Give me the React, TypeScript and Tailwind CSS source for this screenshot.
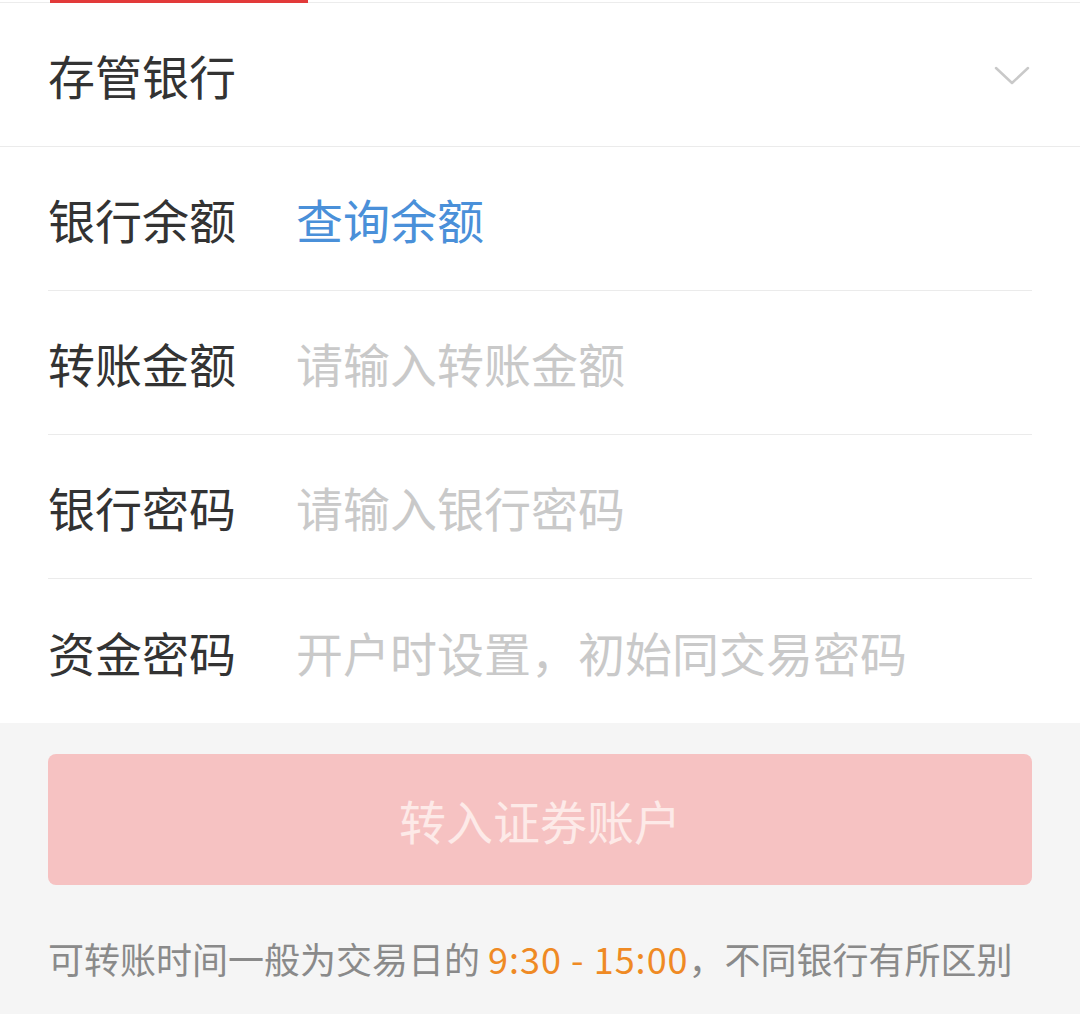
const FONT = '"Noto Sans CJK SC", "Noto Sans", sans-serif';

const rows = [
  { label: '银行余额', value: '查询余额', link: true },
  { label: '转账金额', value: '请输入转账金额' },
  { label: '银行密码', value: '请输入银行密码' },
  { label: '资金密码', value: '开户时设置，初始同交易密码' },
];

function Chevron() {
  return (
    <svg width="36" height="22" viewBox="0 0 36 22" fill="none">
      <path d="M2 3 L18 18 L34 3" stroke="#c9c9c9" strokeWidth="2.5" strokeLinecap="round" strokeLinejoin="round" />
    </svg>
  );
}

export default function App() {
  return (
    <div className="w-[1080px] h-[1014px] bg-[#f5f5f5] overflow-hidden" style={{ fontFamily: FONT }}>
      {/* tab underline */}
      <div className="h-[3px] bg-white border-b border-[#ececec] relative">
        <div className="absolute left-[50px] top-0 w-[258px] h-[3px] bg-[#e23a3a]" />
      </div>

      <div className="bg-white">
        {/* bank picker */}
        <div className="h-[144px] px-[48px] flex items-center justify-between border-b border-[#ebebeb]">
          <span className="text-[47px] text-[#333333] leading-none">存管银行</span>
          <span className="mr-[2px] mt-[3px]">
            <Chevron />
          </span>
        </div>

        <div className="px-[48px]">
          {rows.map((r, i) => (
            <div
              key={r.label}
              className={`h-[144px] flex items-center ${i < rows.length - 1 ? 'border-b border-[#ebebeb]' : ''}`}
            >
              <span className="w-[248px] text-[47px] text-[#333333] leading-none">{r.label}</span>
              <span className={`text-[47px] leading-none ${r.link ? 'text-[#4a90d9]' : 'text-[#c9c9c9]'}`}>
                {r.value}
              </span>
            </div>
          ))}
        </div>
      </div>

      <div className="px-[48px] pt-[31px]">
        <button className="w-full h-[131px] rounded-[8px] bg-[#f6c2c2] text-[47px] text-[#fdeae8] leading-none">
          转入证券账户
        </button>
        <p className="mt-[55px] text-[36px] text-[#8a8a8a] leading-none whitespace-nowrap">
          可转账时间一般为交易日的{' '}
          <span className="text-[#ef8a24] tracking-[1px]">9:30 - 15:00</span>，不同银行有所区别
        </p>
      </div>
    </div>
  );
}
